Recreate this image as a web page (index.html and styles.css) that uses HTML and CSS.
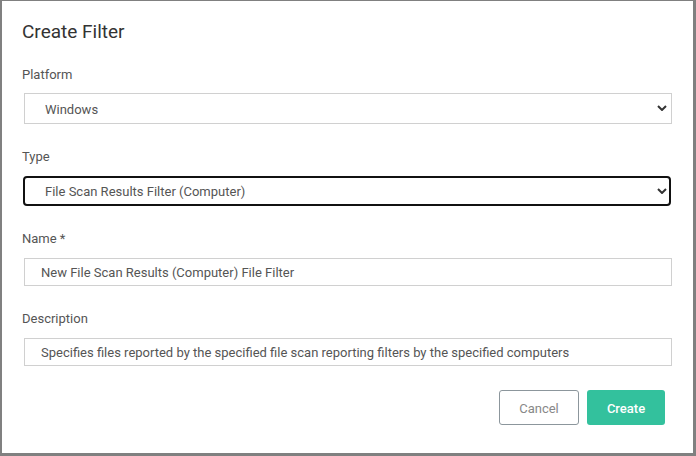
FILE: index.html
```html
<!DOCTYPE html>
<html>
<head>
<meta charset="utf-8">
<link rel="stylesheet" href="styles.css">
</head>
<body>
<div class="dialog">
  <h1 class="title">Create Filter</h1>
  <div class="field field-first">
    <label class="label">Platform</label>
    <div class="select-wrap">
      <select class="select"><option>Windows</option></select>
      <svg class="chev" width="10" height="6" viewBox="0 0 10 6"><path d="M1 1 L5 5 L9 1" fill="none" stroke="#333" stroke-width="2"/></svg>
    </div>
  </div>
  <div class="field">
    <label class="label">Type</label>
    <div class="select-wrap">
      <select class="select focused"><option>File Scan Results Filter (Computer)</option></select>
      <svg class="chev" width="10" height="6" viewBox="0 0 10 6"><path d="M1 1 L5 5 L9 1" fill="none" stroke="#333" stroke-width="2"/></svg>
    </div>
  </div>
  <div class="field">
    <label class="label">Name *</label>
    <input class="input" type="text" value="New File Scan Results (Computer) File Filter">
  </div>
  <div class="field">
    <label class="label">Description</label>
    <input class="input" type="text" value="Specifies files reported by the specified file scan reporting filters by the specified computers">
  </div>
  <div class="actions">
    <button class="btn cancel">Cancel</button>
    <button class="btn create">Create</button>
  </div>
</div>
</body>
</html>
```
FILE: styles.css
```css
* { box-sizing: border-box; }
html, body { margin: 0; padding: 0; background: #fff; }
body { font-family: Roboto, "Liberation Sans", sans-serif; }
.dialog {
  width: 696px;
  height: 456px;
  border-style: solid;
  border-color: #808080;
  border-width: 1px 3px 3px 2px;
  padding: 19px 21px 0 20px;
  display: flex;
  flex-direction: column;
}
.title {
  margin: 0 0 21px 0;
  font-size: 19px;
  line-height: 24px;
  font-weight: 400;
  color: #333;
}
.field {
  display: flex;
  flex-direction: column;
  margin-bottom: 23px;
}
.label {
  font-size: 13px;
  line-height: 20px;
  color: #555;
  margin-bottom: 9px;
}
.field-first .label {
  margin-bottom: 8px;
}
.select-wrap {
  position: relative;
  margin-left: 2px;
  display: flex;
}
.select {
  appearance: none;
  -webkit-appearance: none;
  width: 100%;
  height: 31px;
  border: 1px solid #d0d0d0;
  border-radius: 0;
  background: #fff;
  font-family: Roboto, "Liberation Sans", sans-serif;
  font-size: 13px;
  color: #555;
  padding: 2px 0 0 20px;
  outline: none;
}
.select.focused {
  height: 30px;
  border: 2px solid #111;
  border-radius: 4px;
  margin-left: -1px;
  padding: 1px 0 0 20px;
}
.chev {
  position: absolute;
  right: 5px;
  top: 12px;
  pointer-events: none;
}
.input {
  margin-left: 2px;
  height: 28px;
  border: 1px solid #d0d0d0;
  padding: 0 0 0 16px;
  font-family: Roboto, "Liberation Sans", sans-serif;
  font-size: 13px;
  color: #555;
  outline: none;
}
.actions {
  display: flex;
  justify-content: flex-end;
  gap: 8px;
  margin-top: 1px;
  padding-right: 7px;
}
.btn {
  height: 35px;
  border-radius: 3px;
  font-family: Roboto, "Liberation Sans", sans-serif;
  font-size: 13px;
  padding-top: 2px;
  cursor: pointer;
}
.cancel {
  width: 80px;
  background: #fff;
  border: 1px solid #8c969c;
  color: #888;
}
.create {
  width: 78px;
  background: #33c19d;
  border: none;
  color: #fff;
  font-weight: 500;
}
```
